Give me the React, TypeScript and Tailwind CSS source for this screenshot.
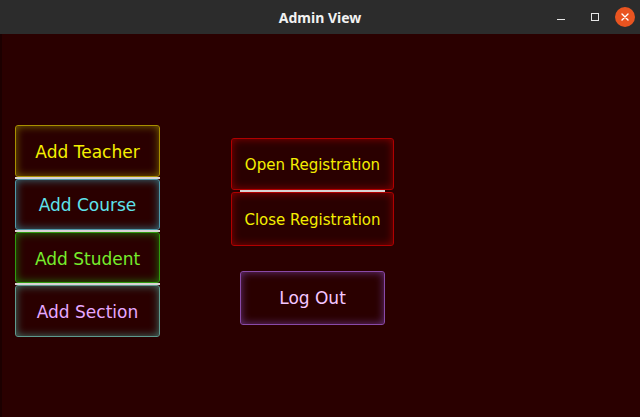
import { type ReactNode } from "react"

type GlowButtonProps = {
  label: string
  className: string
  textClass: string
}

function GlowButton({ label, className, textClass }: GlowButtonProps) {
  return (
    <div className={`flex items-center justify-center rounded-[3px] border bg-[#2a0000] ${className}`}>
      <span className={`text-[17px] ${textClass}`}>{label}</span>
    </div>
  )
}

function Separator({ inset = false }: { inset?: boolean }) {
  return <div className={`h-[2px] bg-[#d9d4d4] ${inset ? "mx-[9px]" : ""}`} />
}

function TitleBar({ children }: { children: ReactNode }) {
  return (
    <div className="relative flex h-[34px] items-center justify-center bg-[#2c2c2c]">
      <span className="font-['Noto_Sans',sans-serif] text-[14px] font-bold text-[#f2f2f2]">{children}</span>
      <div className="absolute right-[5px] top-0 flex h-full items-center">
        {/* minimize */}
        <div className="flex h-[20px] w-[20px] items-center justify-center">
          <div className="mt-[5px] h-[1px] w-[8px] bg-[#e6e6e6]" />
        </div>
        {/* maximize */}
        <div className="ml-[14px] flex h-[20px] w-[20px] items-center justify-center">
          <div className="h-[8px] w-[8px] border border-[#e6e6e6]" />
        </div>
        {/* close */}
        <div className="ml-[10px] flex h-[20px] w-[20px] items-center justify-center rounded-full bg-[#e95420]">
          <svg width="10" height="10" viewBox="0 0 10 10">
            <path d="M2 2 L8 8 M8 2 L2 8" stroke="#ffffff" strokeWidth="1.4" strokeLinecap="round" />
          </svg>
        </div>
      </div>
    </div>
  )
}

export default function App() {
  return (
    <div className="flex h-[417px] w-[640px] flex-col overflow-hidden bg-[#2a0000] font-['DejaVu_Sans',sans-serif]">
      <TitleBar>Admin View</TitleBar>

      <div className="flex flex-1 border-l-2 border-[#1c0000] pl-[13px] pt-[91px]">
        {/* Add buttons */}
        <div className="flex w-[145px] flex-col">
          <GlowButton
            label="Add Teacher"
            className="h-[52px] border-[#a88f00] shadow-[inset_0_0_9px_#7a6600]"
            textClass="translate-y-[2px] text-[#f4f000]"
          />
          <Separator />
          <GlowButton
            label="Add Course"
            className="h-[51px] border-[#4f98a8] shadow-[inset_0_0_9px_#36707e]"
            textClass="translate-y-[1px] text-[#5fe3ec]"
          />
          <Separator />
          <GlowButton
            label="Add Student"
            className="h-[51px] border-[#2f9a0e] shadow-[inset_0_0_9px_#23760a]"
            textClass="translate-y-[2px] text-[#76ec2c]"
          />
          <Separator />
          <GlowButton
            label="Add Section"
            className="h-[52px] border-[#5f9a8e] shadow-[inset_0_0_9px_#44766c]"
            textClass="translate-y-[2px] text-[#e6a8ff]"
          />
        </div>

        {/* Registration + log out */}
        <div className="ml-[71px] mt-[13px] flex w-[163px] flex-col">
          <GlowButton
            label="Open Registration"
            className="h-[52px] border-[#b00000] shadow-[inset_0_0_9px_#880000]"
            textClass="translate-y-[1px] !text-[15px] text-[#f4ee00]"
          />
          <Separator inset />
          <GlowButton
            label="Close Registration"
            className="h-[54px] border-[#b00000] shadow-[inset_0_0_9px_#880000]"
            textClass="translate-y-[1px] !text-[15px] text-[#f4ee00]"
          />
          <div className="mt-[25px] flex justify-center">
            <GlowButton
              label="Log Out"
              className="h-[54px] w-[145px] border-[#8a4aa8] shadow-[inset_0_0_9px_#66327e]"
              textClass="translate-y-[1px] text-[#f4c6ff]"
            />
          </div>
        </div>
      </div>
    </div>
  )
}
